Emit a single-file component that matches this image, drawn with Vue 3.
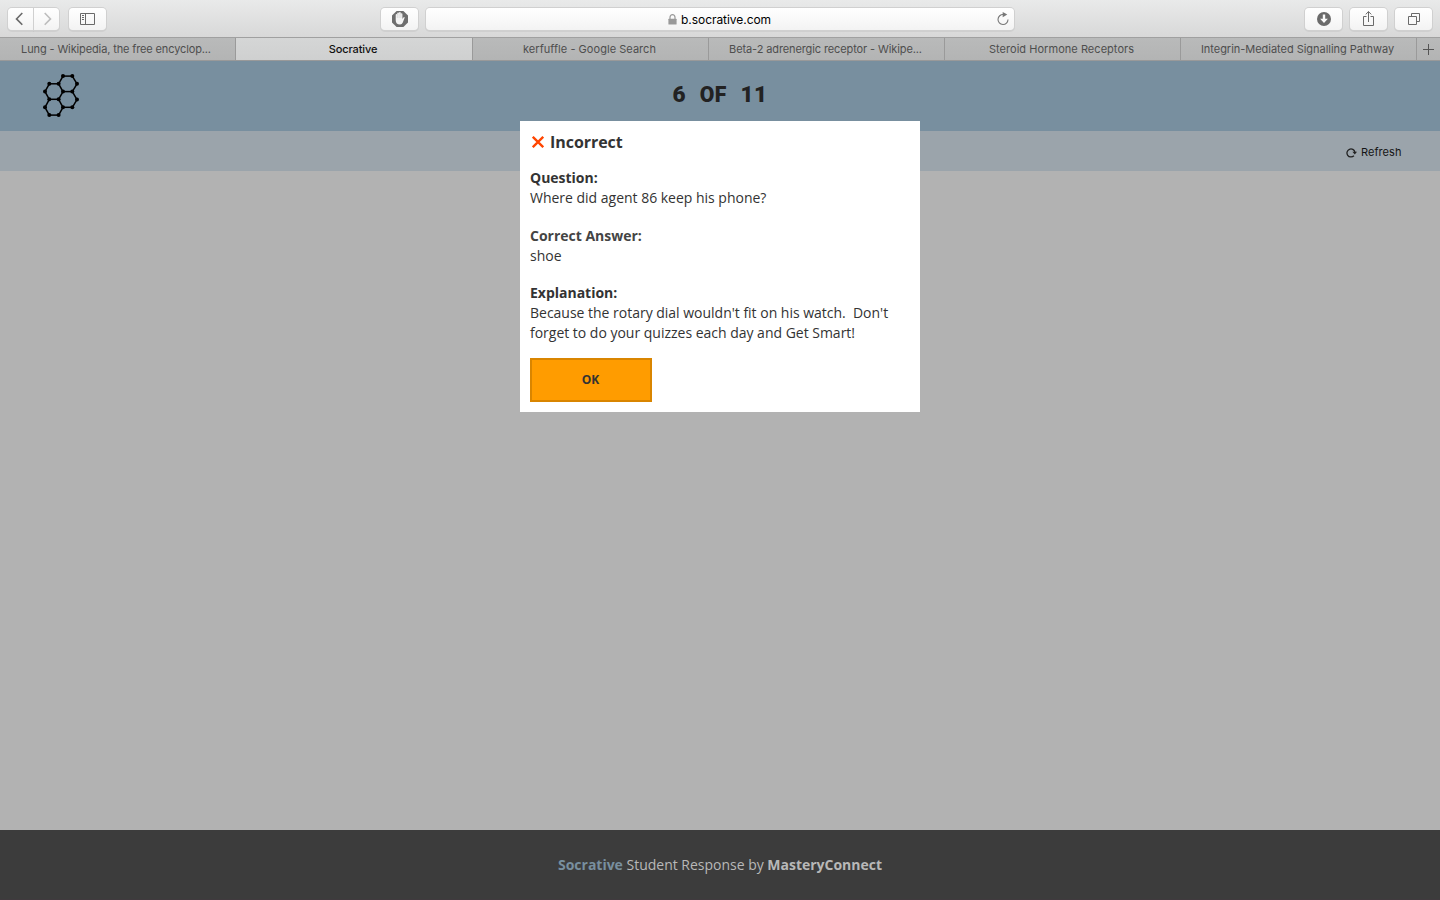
<script setup>
const tabs = [
  'Lung - Wikipedia, the free encyclop...',
  'Socrative',
  'kerfuffle - Google Search',
  'Beta-2 adrenergic receptor - Wikipe...',
  'Steroid Hormone Receptors',
  'Integrin-Mediated Signalling Pathway',
]
const atoms = [
  [23, 1.5], [32.3, 1.5], [37, 9.2], [32.3, 17], [23, 17], [18.6, 9.2],
  [9.3, 9.2], [5, 17], [9.3, 24.7], [18.6, 24.7], [37, 25], [32.3, 32.7],
  [23, 32.7], [5, 32.7], [9.3, 40.5], [18.6, 40.5],
]
const bonds = [
  [0, 1], [1, 2], [2, 3], [3, 4], [4, 5], [5, 0], [5, 6], [6, 7], [7, 8], [8, 9],
  [9, 4], [3, 10], [10, 11], [11, 12], [12, 9], [8, 13], [13, 14], [14, 15], [15, 12],
]
</script>

<template>
  <div class="window">
    <header class="toolbar">
      <div class="left">
        <button class="btn nav back"><svg width="26" height="22" viewBox="0 0 26 22" fill="none" stroke="#6a6a6a" stroke-width="1.6"><path d="M14.3 5 8.5 10.9l5.8 5.9" /></svg></button>
        <button class="btn nav"><svg width="26" height="22" viewBox="0 0 26 22" fill="none" stroke="#bdbdbd" stroke-width="1.6"><path d="m10.7 5 5.8 5.9-5.8 5.9" /></svg></button>
        <button class="btn side"><svg width="37" height="22" viewBox="0 0 37 22" fill="none" stroke="#6a6a6a"><path d="M11.5 5.5h14v11h-14zM16.5 5.5v11M13 7.5h2M13 9.5h2M13 11.5h2" /></svg></button>
      </div>
      <button class="btn block">
        <svg width="37" height="22" viewBox="0 0 37 22">
          <path d="M15.6 3h6.8l4.6 4.6v6.8L22.4 19h-6.8L11 14.4V7.6z" fill="#6e6e6e" />
          <path d="M14.7 10.5V7q0-.9.7-.9t.8.9V5.5q.1-.9.9-.9t.9.9V5q.1-.9.9-.9t.9.9v1q.1-.8.8-.8t.8.9v5l1-1.6q.7-.8 1.3-.1l-1.9 5q-.8 2-2.7 2-4.4 0-4.4-4.5z" fill="#f4f4f4" />
          <path d="M16.3 6.5V10M18.1 5.5V10M19.9 5.7V10" stroke="#b5b5b5" stroke-width=".35" />
        </svg>
      </button>
      <div class="address">
        <svg class="lock" width="9" height="11" viewBox="0 0 9 11"><path d="M2 5V3.2a2.5 2.5 0 0 1 5 0V5" fill="none" stroke="#999" stroke-width="1.2" /><rect x=".4" y="4.7" width="8.2" height="5.8" rx=".6" fill="#999" /></svg>
        <span>b.socrative.com</span>
        <svg class="reload" width="14" height="14" viewBox="0 0 14 14"><path d="M7.4 2.5a5 5 0 1 0 4.6 5" fill="none" stroke="#777" stroke-width="1.1" /><path d="m6.7 0 4.6 2.6-4.6 2.6z" fill="#777" /></svg>
      </div>
      <div class="right">
        <button class="btn"><svg width="37" height="22" viewBox="0 0 37 22"><circle cx="19" cy="11" r="7" fill="#6a6a6a" /><path d="M17.8 6.5h2.4v4.2h2.7L19 15l-3.9-4.3h2.7z" fill="#fafafa" /></svg></button>
        <button class="btn"><svg width="37" height="22" viewBox="0 0 37 22" fill="none" stroke="#6a6a6a"><path d="M16.5 8.5h-3v9h10v-9h-3M18.5 14V3.5M15.7 6.4l2.8-2.8 2.8 2.8" /></svg></button>
        <button class="btn"><svg width="37" height="22" viewBox="0 0 37 22" fill="none" stroke="#6a6a6a"><path d="M13.5 8.5h8v8h-8zM16.5 8.5v-3h8v8h-3" /></svg></button>
      </div>
    </header>

    <nav class="tabs">
      <div v-for="(tab, i) in tabs" :key="tab" class="tab" :class="['t' + i, { active: i === 1 }]">{{ tab }}</div>
      <div class="add"><svg width="11" height="11" viewBox="0 0 11 11" stroke="#555" fill="none"><path d="M0 5.5h11M5.5 0v11" /></svg></div>
    </nav>

    <section class="banner">
      <svg class="logo" width="42" height="46" viewBox="0 0 42 46">
        <line v-for="(b, i) in bonds" :key="i" :x1="atoms[b[0]][0]" :y1="atoms[b[0]][1] + 1.6" :x2="atoms[b[1]][0]" :y2="atoms[b[1]][1] + 1.6" stroke="#000" stroke-width="1.5" />
        <circle v-for="(a, i) in atoms" :key="'a' + i" :cx="a[0]" :cy="a[1] + 1.6" r="2" />
      </svg>
      <h1><span>6</span> <span class="of">OF</span> <span>11</span></h1>
    </section>

    <section class="subbar">
      <svg width="11" height="11" viewBox="0 0 11 11"><path d="M7.9 8.7A4 4 0 1 1 8.9 5.2" fill="none" stroke="#222" stroke-width="1.3" /><path d="M6.4 4.8H11L8.8 7.4z" fill="#222" /></svg>
      <span>Refresh</span>
    </section>

    <main class="content">
      <div class="dialog">
        <h2><svg width="12" height="12" viewBox="0 0 12 12"><path d="m.8.8 10.4 10.4M11.2.8.8 11.2" stroke="#ff4500" stroke-width="2.3" /></svg><span>Incorrect</span></h2>
        <div class="entry"><strong>Question:</strong><p>Where did agent 86 keep his phone?</p></div>
        <div class="entry answer"><strong>Correct Answer:</strong><p>shoe</p></div>
        <div class="entry last"><strong>Explanation:</strong><p>Because the rotary dial wouldn't fit on his watch.&nbsp; Don't forget to do your quizzes each day and Get Smart!</p></div>
        <button class="ok">OK</button>
      </div>
    </main>

    <footer><span><b class="brand">Socrative</b> Student Response by <b>MasteryConnect</b></span></footer>
  </div>
</template>

<style>
body { margin: 0; overflow: hidden; }
</style>

<style scoped>
* { box-sizing: border-box; }
.window { width: 1440px; height: 900px; display: flex; flex-direction: column; background: #b2b2b2; font-family: "Open Sans", sans-serif; color: #333; }
.toolbar { height: 37px; flex: none; display: flex; align-items: flex-start; padding: 8px 7px 0; background: linear-gradient(#e9eaea, #d8d8d8); font-family: Inter, sans-serif; }
.btn { width: 37px; height: 22px; padding: 0; border: 0; border-radius: 4px; background: linear-gradient(#fff, #f3f3f3); box-shadow: 0 0 0 1px #d0d0d0, 0 1px 0 1px #bdbdbd66; display: block; }
.btn svg { display: block; }
.left { display: flex; width: 374px; padding-left: 1px; }
.nav { width: 25px; border-radius: 0 4px 4px 0; }
.nav.back { border-radius: 4px 0 0 4px; margin-right: 1px; }
.side { margin-left: 10px; }
.address { width: 588px; height: 22px; margin-left: 8px; border-radius: 4px; background: linear-gradient(#fff, #f3f3f3); box-shadow: 0 0 0 1px #d0d0d0, 0 1px 0 1px #bdbdbd66; display: flex; align-items: center; padding: 0 4.5px 0 241.5px; font-size: 12px; color: #000; }
.address span { margin-left: 4.5px; letter-spacing: -.05px; white-space: nowrap; }
.reload { margin-left: auto; }
.right { margin-left: auto; display: flex; gap: 8px; padding-right: 1px; }
.tabs { height: 24px; flex: none; display: flex; border-top: 1px solid #a0a0a0; border-bottom: 1px solid #999; background: linear-gradient(#b9baba, #b3b4b4); font: 11px/22px Inter, sans-serif; color: #4e4e4e; }
.tab { flex: none; width: 236px; border-right: 1px solid #9a9a9a; text-align: center; white-space: nowrap; padding-right: 2px; }
.t0 { letter-spacing: -.13px; padding-right: 3px; }
.t1 { width: 237px; }
.t2, .t4 { letter-spacing: .04px; }
.t3 { letter-spacing: -.11px; }
.t5 { letter-spacing: -.03px; }
.tab.active { background: linear-gradient(#d5d6d6, #cfd0d0); color: #111; font-weight: 500; letter-spacing: -.1px; }
.add { flex: 1; display: flex; align-items: center; justify-content: center; }
.banner { height: 70px; flex: none; background: #788f9f; display: grid; grid-template-columns: 1fr auto 1fr; align-items: center; }
.logo { margin-left: 40px; }
h1 { grid-column: 2; margin: -4px 0 0; font: 900 22.5px/30px Roboto, sans-serif; letter-spacing: .4px; word-spacing: 7px; color: #222; white-space: nowrap; }
.of { display: inline-block; transform: scaleX(.94); }
.subbar { height: 40px; flex: none; background: #9ba4ab; display: flex; align-items: center; justify-content: flex-end; gap: 4px; padding: 2px 38.5px 0 0; font: 11px/16px Inter, sans-serif; letter-spacing: .05px; color: #151515; }
.content { flex: 1; display: flex; justify-content: center; align-items: flex-start; }
.dialog { position: relative; width: 400px; height: 291px; margin-top: -50px; padding: 10px; background: #fff; font-size: 14px; line-height: 20px; letter-spacing: -.012px; }
h2 { margin: 0 0 15px; height: 22px; display: flex; align-items: center; gap: 6px; padding-left: 2px; font-size: 16px; line-height: 22px; font-weight: 700; letter-spacing: -.05px; }
.entry { margin-bottom: 17.6px; }
.entry strong { display: block; font-weight: 700; }
.entry p { margin: 0; }
.answer strong { color: #444; }
.last { margin-bottom: 15px; }
.ok { display: block; width: 122px; height: 44px; padding: 0 1px 0 0; border: 2px solid #d98500; background: #ff9c00; font: 700 12px/20px "Open Sans", sans-serif; color: #333; }
footer { height: 70px; flex: none; display: flex; align-items: center; justify-content: center; background: linear-gradient(#3c3c3c 69px, #403a3e 69px); color: #b8b8b8; font-size: 14px; line-height: 20px; letter-spacing: -.01px; }
.brand { color: #788f9f; }
</style>
